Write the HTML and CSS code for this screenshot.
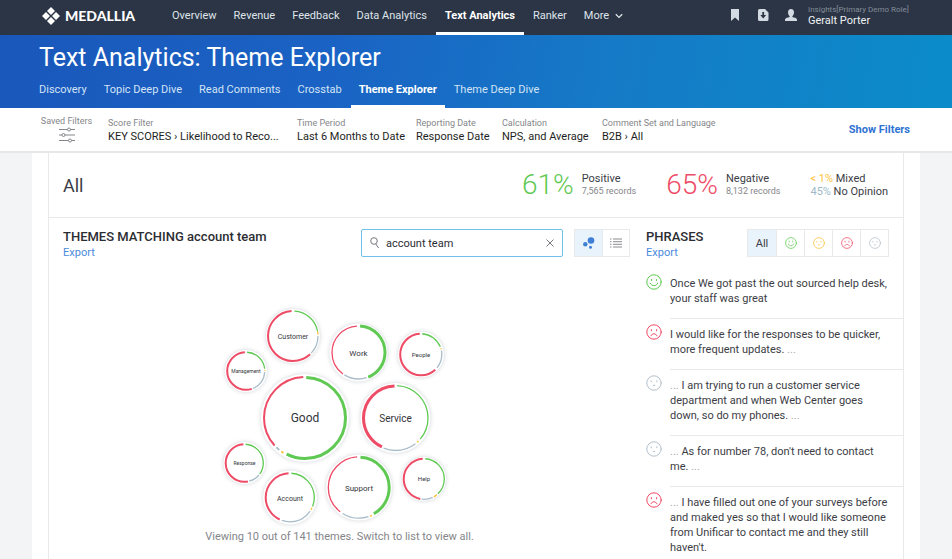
FILE: index.html
```html
<!DOCTYPE html>
<html lang="en">
<head>
  <meta charset="UTF-8"/>
  <meta name="viewport" content="width=device-width,initial-scale=1"/>
  <title>Text Analytics: Theme Explorer</title>
  <link rel="stylesheet" href="styles.css">
</head>
<body>
  <!-- shared face icons -->
  <svg class="sprite" aria-hidden="true">
    <symbol id="face-happy" viewBox="0 0 16 16">
      <circle cx="8" cy="8" r="7.2"/>
      <path d="M5.6 5.4v1.2M10.4 5.4v1.2M4.3 9.2c1.2 3.4 6.2 3.4 7.4 0"/>
    </symbol>
    <symbol id="face-mixed" viewBox="0 0 16 16">
      <circle cx="8" cy="8" r="7.2"/>
      <path d="M5.2 5.8v1M10.8 5.8v1M7.2 10.4h1.6"/>
    </symbol>
    <symbol id="face-sad" viewBox="0 0 16 16">
      <circle cx="8" cy="8" r="7.2"/>
      <path d="M5.4 5.6v1.2M10.6 5.6v1.2M5 11.8c1-2.800 5-2.800 6 0"/>
    </symbol>
  </svg>

  <nav class="topbar">
    <a class="logo" href="#">
      <svg viewBox="0 0 18 18" width="18" height="18" aria-hidden="true">
        <path d="M9 0l4 4-4 4-4-4zM9 10l4 4-4 4-4-4zM4 5l4 4-4 4-4-4zM14 5l4 4-4 4-4-4z"/>
      </svg>
      MEDALLIA
    </a>
    <div class="nav-links">
      <a href="#">Overview</a>
      <a href="#">Revenue</a>
      <a href="#">Feedback</a>
      <a href="#">Data Analytics</a>
      <a href="#" class="active">Text Analytics</a>
      <a href="#">Ranker</a>
      <a href="#">More
        <svg viewBox="0 0 8 6" width="8" height="6" aria-hidden="true"><path d="M.8 1.2L4 4.4l3.2-3.2"/></svg>
      </a>
    </div>
    <div class="tools">
      <button aria-label="Bookmarks">
        <svg viewBox="0 0 12 12" width="12" height="12"><path d="M2 0h8v12L6 8.6 2 12z"/></svg>
      </button>
      <button aria-label="Downloads">
        <svg viewBox="0 0 12 12" width="12" height="12"><path fill-rule="evenodd" d="M2.5 0H8l3.5 3.5v7A1.5 1.5 0 0 1 10 12H2.500A1.500 1.500 0 0 1 1 10.500v-9A1.500 1.500 0 0 1 2.500 0zM5.300 3v3H3.300L6.200 9.500 9.200 6H7.100V3z"/></svg>
      </button>
      <button aria-label="Account">
        <svg viewBox="0 0 12 12" width="12" height="12"><path d="M6 0c2 0 3 1.300 3 3.200C9 5 8.300 6.300 7.400 7v1c1.800.6 4.100.9 4.600 2.400V12H0v-1.600C.5 8.900 2.800 8.600 4.600 8V7C3.700 6.300 3 5 3 3.200 3 1.300 4 0 6 0z"/></svg>
      </button>
      <div class="user">
        <span class="role">Insights[Primary Demo Role]</span>
        <span class="name">Geralt Porter</span>
      </div>
    </div>
  </nav>

  <header class="page-head">
    <h1>Text Analytics: Theme Explorer</h1>
    <div class="tabs">
      <a href="#">Discovery</a>
      <a href="#">Topic Deep Dive</a>
      <a href="#">Read Comments</a>
      <a href="#">Crosstab</a>
      <a href="#" class="active">Theme Explorer</a>
      <a href="#">Theme Deep Dive</a>
    </div>
  </header>

  <section class="filters">
    <button class="saved">
      Saved Filters
      <svg viewBox="0 0 16 16" width="16" height="16" aria-hidden="true">
        <path d="M0 2.500h8.500M11.500 2.500H16M0 8h3M6 8h10M0 13.500h9.500M12.500 13.500H16"/>
        <circle cx="10" cy="2.500" r="1.500"/><circle cx="4.500" cy="8" r="1.500"/><circle cx="11" cy="13.500" r="1.500"/>
      </svg>
    </button>
    <div class="filter score"><span>Score Filter</span><b>KEY SCORES › Likelihood to Reco...</b></div>
    <div class="filter period"><span>Time Period</span><b>Last 6 Months to Date</b></div>
    <div class="filter date"><span>Reporting Date</span><b>Response Date</b></div>
    <div class="filter calc"><span>Calculation</span><b>NPS, and Average</b></div>
    <div class="filter"><span>Comment Set and Language</span><b>B2B › All</b></div>
    <a class="show-filters" href="#">Show Filters</a>
  </section>

  <main class="shell">
    <div class="card">
      <div class="summary">
        <h2>All</h2>
        <div class="stat positive">
          <strong>61%</strong>
          <p>Positive<small>7,565 records</small></p>
        </div>
        <div class="stat negative">
          <strong>65%</strong>
          <p>Negative<small>8,132 records</small></p>
        </div>
        <div class="others">
          <p><span class="few">&lt; 1%</span> Mixed</p>
          <p><span class="none">45%</span> No Opinion</p>
        </div>
      </div>

      <div class="columns">
        <section class="themes">
          <div class="section-head">
            <div class="heading">
              <h3>THEMES MATCHING account team</h3>
              <a href="#">Export</a>
            </div>
            <label class="search">
              <svg viewBox="0 0 10 12" width="10" height="12" aria-hidden="true"><circle cx="4" cy="4" r="3.300"/><path d="M5.800 7l2.800 4"/></svg>
              <input type="text" value="account team" aria-label="Search themes"/>
              <button aria-label="Clear search"><svg viewBox="0 0 8 8" width="8" height="8"><path d="M.5.500l7 7M7.500.500l-7 7"/></svg></button>
            </label>
            <div class="toggle view">
              <button class="on" aria-label="Bubble view">
                <svg viewBox="0 0 12 12" width="12" height="12"><circle cx="8" cy="3.500" r="3.300"/><circle cx="2.300" cy="7.300" r="2.200"/><circle cx="7.500" cy="10.300" r="1.500"/></svg>
              </button>
              <button aria-label="List view">
                <svg viewBox="0 0 12 10" width="12" height="10"><path d="M0 1h1.500M3 1h9M0 3.700h1.500M3 3.700h9M0 6.300h1.500M3 6.300h9M0 9h1.500M3 9h9"/></svg>
              </button>
            </div>
          </div>

          <!-- each ring runs clockwise from the top: positive, mixed, no opinion, negative -->
          <svg class="bubbles" viewBox="0 0 240 229" width="240" height="229">
            <g transform="translate(73 36)">
              <circle class="disc" r="27"/>
              <circle class="arc pos" r="25" pathLength="100" stroke-dasharray="21 100" stroke-dashoffset="-1"/>
              <circle class="arc mix" r="25" pathLength="100" stroke-dasharray="2 100" stroke-dashoffset="-22"/>
              <circle class="arc non" r="25" pathLength="100" stroke-dasharray="12 100" stroke-dashoffset="-25"/>
              <circle class="arc neg mid" r="25" pathLength="100" stroke-dasharray="61 100" stroke-dashoffset="-38"/>
              <text class="t7" y="3">Customer</text>
            </g>
            <g transform="translate(138.500 52.500)">
              <circle class="disc" r="29"/>
              <circle class="arc pos thick" r="26.500" pathLength="100" stroke-dasharray="43 100" stroke-dashoffset="-1"/>
              <circle class="arc non" r="26.500" pathLength="100" stroke-dasharray="14 100" stroke-dashoffset="-45"/>
              <circle class="arc neg" r="26.500" pathLength="100" stroke-dasharray="39 100" stroke-dashoffset="-60"/>
              <text class="t8" y="3">Work</text>
            </g>
            <g transform="translate(201 54.500)">
              <circle class="disc" r="23"/>
              <circle class="arc pos" r="20.800" pathLength="100" stroke-dasharray="18 100" stroke-dashoffset="-1"/>
              <circle class="arc mix" r="20.800" pathLength="100" stroke-dasharray="1 100" stroke-dashoffset="-20"/>
              <circle class="arc non" r="20.800" pathLength="100" stroke-dasharray="14 100" stroke-dashoffset="-22"/>
              <circle class="arc neg mid" r="20.800" pathLength="100" stroke-dasharray="61 100" stroke-dashoffset="-38"/>
              <text class="t6" y="2">People</text>
            </g>
            <g transform="translate(26 71)">
              <circle class="disc" r="21"/>
              <circle class="arc pos" r="18.800" pathLength="100" stroke-dasharray="22 100" stroke-dashoffset="-1"/>
              <circle class="arc mix" r="18.800" pathLength="100" stroke-dasharray="1 100" stroke-dashoffset="-24"/>
              <circle class="arc non" r="18.800" pathLength="100" stroke-dasharray="18 100" stroke-dashoffset="-26"/>
              <circle class="arc neg mid" r="18.800" pathLength="100" stroke-dasharray="54 100" stroke-dashoffset="-45"/>
              <text class="t5" y="2">Management</text>
            </g>
            <g transform="translate(85 118)">
              <circle class="disc" r="44"/>
              <circle class="arc pos thick" r="40.500" pathLength="100" stroke-dasharray="57 100" stroke-dashoffset="-.5"/>
              <circle class="arc mix mid" r="41" pathLength="100" stroke-dasharray="1 100" stroke-dashoffset="-58.800"/>
              <circle class="arc non mid" r="41" pathLength="100" stroke-dasharray="1.500 100" stroke-dashoffset="-60.800"/>
              <circle class="arc neg mid" r="41" pathLength="100" stroke-dasharray="36 100" stroke-dashoffset="-63.300"/>
              <text class="t12" y="4">Good</text>
            </g>
            <g transform="translate(175.500 118)">
              <circle class="disc" r="35"/>
              <circle class="arc pos" r="32.500" pathLength="100" stroke-dasharray="35.500 100" stroke-dashoffset="-.8"/>
              <circle class="arc mix" r="32.500" pathLength="100" stroke-dasharray="1 100" stroke-dashoffset="-37.500"/>
              <circle class="arc non" r="32.500" pathLength="100" stroke-dasharray="16.500 100" stroke-dashoffset="-39.500"/>
              <circle class="arc neg thick" r="32" pathLength="100" stroke-dasharray="42.500 100" stroke-dashoffset="-57"/>
              <text class="t10" y="4">Service</text>
            </g>
            <g transform="translate(24.500 163)">
              <circle class="disc" r="21"/>
              <circle class="arc pos" r="18.800" pathLength="100" stroke-dasharray="34 100" stroke-dashoffset="-1"/>
              <circle class="arc non" r="18.800" pathLength="100" stroke-dasharray="10 100" stroke-dashoffset="-36"/>
              <circle class="arc neg mid" r="18.800" pathLength="100" stroke-dasharray="52 100" stroke-dashoffset="-47"/>
              <text class="t5" y="2">Response</text>
            </g>
            <g transform="translate(70 197.500)">
              <circle class="disc" r="27"/>
              <circle class="arc pos" r="24.300" pathLength="100" stroke-dasharray="30 100" stroke-dashoffset="-1"/>
              <circle class="arc mix" r="24.300" pathLength="100" stroke-dasharray="1.500 100" stroke-dashoffset="-32"/>
              <circle class="arc non" r="24.300" pathLength="100" stroke-dasharray="21 100" stroke-dashoffset="-34.500"/>
              <circle class="arc neg mid" r="24.300" pathLength="100" stroke-dasharray="42 100" stroke-dashoffset="-57"/>
              <text class="t7" y="3">Account</text>
            </g>
            <g transform="translate(139 187.500)">
              <circle class="disc" r="33"/>
              <circle class="arc pos thick" r="30.200" pathLength="100" stroke-dasharray="41 100" stroke-dashoffset="-.8"/>
              <circle class="arc mix" r="30.700" pathLength="100" stroke-dasharray="1.200 100" stroke-dashoffset="-43"/>
              <circle class="arc non" r="30.700" pathLength="100" stroke-dasharray="14 100" stroke-dashoffset="-45"/>
              <circle class="arc neg" r="30.700" pathLength="100" stroke-dasharray="38.500 100" stroke-dashoffset="-60.500"/>
              <text class="t8" y="3">Support</text>
            </g>
            <g transform="translate(204 179)">
              <circle class="disc" r="22"/>
              <circle class="arc pos" r="20.300" pathLength="100" stroke-dasharray="37 100" stroke-dashoffset="-1"/>
              <circle class="arc mix" r="20.300" pathLength="100" stroke-dasharray="3 100" stroke-dashoffset="-39"/>
              <circle class="arc non" r="20.300" pathLength="100" stroke-dasharray="9 100" stroke-dashoffset="-43"/>
              <circle class="arc neg mid" r="20.300" pathLength="100" stroke-dasharray="46 100" stroke-dashoffset="-53"/>
              <text class="t6" y="2">Help</text>
            </g>
          </svg>
          <p class="caption">Viewing 10 out of 141 themes. Switch to list to view all.</p>
        </section>

        <section class="phrases">
          <div class="section-head">
            <div class="heading">
              <h3>PHRASES</h3>
              <a href="#">Export</a>
            </div>
            <div class="toggle mood">
              <button class="on">All</button>
              <button aria-label="Positive"><svg class="face happy"><use href="#face-happy"/></svg></button>
              <button aria-label="Mixed"><svg class="face mixed"><use href="#face-mixed"/></svg></button>
              <button aria-label="Negative"><svg class="face sad"><use href="#face-sad"/></svg></button>
              <button aria-label="No opinion"><svg class="face neutral"><use href="#face-mixed"/></svg></button>
            </div>
          </div>
          <ul>
            <li><svg class="face happy"><use href="#face-happy"/></svg><p>Once We got past the out sourced help desk, your staff was great</p></li>
            <li><svg class="face sad"><use href="#face-sad"/></svg><p>I would like for the responses to be quicker, more frequent updates. <i>...</i></p></li>
            <li><svg class="face neutral"><use href="#face-mixed"/></svg><p><i>...</i> I am trying to run a customer service department and when Web Center goes down, so do my phones. <i>...</i></p></li>
            <li><svg class="face neutral"><use href="#face-mixed"/></svg><p><i>...</i> As for number 78, don't need to contact me. <i>...</i></p></li>
            <li><svg class="face sad"><use href="#face-sad"/></svg><p><i>...</i> I have filled out one of your surveys before and maked yes so that I would like someone from Unificar to contact me and they still haven't.</p></li>
          </ul>
        </section>
      </div>
    </div>
  </main>
</body>
</html>
```

FILE: styles.css
```css
:root {
  --navy: #2b3545;
  --text: #3c3d45;
  --muted: #85868a;
  --link: #4a8bdc;
  --green: #5fc953;
  --red: #ee4b66;
  --yellow: #fbc23c;
  --gray: #a9bdc9;
  --border: #e8e9eb;
}
*, *::before, *::after { margin: 0; padding: 0; box-sizing: border-box; }
body {
  font-family: Roboto, "Liberation Sans", sans-serif;
  font-size: 11px;
  line-height: 15px;
  color: var(--text);
  background: #f3f4f6;
}
a { text-decoration: none; color: inherit; }
button { font: inherit; color: inherit; background: none; border: none; cursor: pointer; }
svg { display: block; flex: none; }
.sprite { position: absolute; width: 0; height: 0; }

/* Top navigation */
.topbar { display: flex; height: 35px; padding: 0 40px 0 42px; background: var(--navy); color: #dfe4ea; }
.logo {
  display: flex; align-items: center; gap: 5px;
  width: 122px; padding-bottom: 4px;
  font-family: Lato, sans-serif; font-size: 14px; font-weight: 900; color: #fff;
}
.logo svg { fill: #fff; }
.nav-links { display: flex; gap: 1px; }
.nav-links a {
  display: flex; align-items: center; gap: 6px;
  padding: 0 8px 1px; border-bottom: 3px solid transparent;
}
.nav-links a.active { padding: 0 9px 1px; font-weight: 700; color: #fff; border-color: #fff; }
.nav-links svg { fill: none; stroke: #dfe4ea; stroke-width: 1.3; }
.tools { display: flex; align-items: center; margin-left: auto; padding-bottom: 5px; }
.tools button { display: flex; justify-content: center; width: 28px; }
.tools svg { fill: #d3dae2; }
.user { display: flex; flex-direction: column; width: 107px; padding-left: 3px; line-height: 11px; }
.user .role { font-size: 8px; color: #848c98; white-space: nowrap; }
.user .name { color: #eef1f4; }

/* Page header */
.page-head {
  padding: 9px 39px 0;
  color: #fff;
  background: linear-gradient(100deg, #1a57bb 0%, #1a63c4 35%, #157bc7 65%, #0b8cc9 100%);
}
.page-head h1 { font-size: 25px; line-height: 27px; font-weight: 400; }
.tabs { display: flex; gap: 1px; margin: 8px -8px 0; }
.tabs a { padding: 3px 8px 8px; border-bottom: 3px solid transparent; color: #d3e4f6; }
.tabs a.active { font-weight: 700; color: #fff; border-color: #fff; }

/* Filter bar */
.filters {
  display: flex; align-items: center;
  height: 45px; padding: 0 42px 0 39px;
  background: #fff; border-bottom: 2px solid #e6e7e9;
}
.saved {
  display: flex; flex-direction: column; align-items: center;
  width: 55px; margin-right: 14px; padding-bottom: 2px;
  font-size: 9px; line-height: 12px; color: var(--muted); white-space: nowrap;
}
.saved svg { fill: none; stroke: #85868a; stroke-width: 1; }
.filter { display: flex; flex-direction: column; line-height: 14px; white-space: nowrap; }
.filter span { font-size: 9px; color: var(--muted); }
.filter b { font-weight: 400; color: #1e1f24; }
.score { width: 189px; }
.period { width: 119px; }
.date { width: 86px; }
.calc { width: 100px; }
.show-filters { margin-left: auto; font-weight: 700; color: #2f72d4; }

/* Content card */
.shell { margin: 0 32px; padding: 0 16px; background: #fff; }
.card { border: 1px solid var(--border); border-top: none; }
.summary {
  display: flex; align-items: center;
  height: 65px; padding: 0 15px 0 14px;
  border-bottom: 1px solid var(--border);
}
.summary h2 { margin-right: auto; font-size: 18px; font-weight: 400; }
.stat { display: flex; align-items: center; gap: 8px; }
.stat strong { font-size: 28px; line-height: 32px; font-weight: 300; }
.stat p { line-height: 12px; }
.stat small { display: block; font-size: 9px; color: var(--muted); }
.positive, .negative { margin-right: 30px; }
.positive strong { color: var(--green); }
.negative strong { color: var(--red); }
.others p { line-height: 13px; }
.others .few { color: var(--yellow); }
.others .none { color: #9dbac6; }

.columns { display: flex; }
.themes { flex: 1; padding-top: 11px; }
.phrases { width: 273px; padding: 11px 0 0 16px; }
.section-head { display: flex; align-items: flex-start; }
.themes .section-head { padding-left: 14px; }
.heading { margin-right: auto; }
.heading h3 { font-size: 13px; line-height: 16px; font-weight: 500; color: #2c2d33; }
.heading a { display: block; color: var(--link); line-height: 16px; }

.search {
  display: flex; align-items: center; gap: 6px;
  width: 202px; height: 28px; padding: 0 6px 0 8px;
  border: 1px solid #6fc0ea; border-radius: 2px;
}
.search input { flex: 1; min-width: 0; border: none; outline: none; font: inherit; color: #2c2d33; }
.search button { padding: 2px; }
.search svg { fill: none; stroke: #77787d; }

.toggle { display: flex; height: 28px; border: 1px solid var(--border); }
.toggle button { display: flex; align-items: center; justify-content: center; width: 27px; }
.toggle button + button { border-left: 1px solid var(--border); }
.toggle .on { background: #e9f3fc; }
.view { margin-left: 11px; }
.view svg { fill: #3f7fd6; }
.view button + button svg { stroke: #8b8c92; }
.mood { margin-right: 14px; }
.mood button { width: 28px; }
.mood .face { width: 12px; height: 12px; }

/* Bubble chart */
.bubbles { margin: 39px auto 0; }
.disc { fill: #fff; filter: drop-shadow(0 0 2px #cfd2d8); }
.arc { fill: none; stroke-width: 1.3; transform: rotate(-90deg); }
.mid { stroke-width: 2; }
.thick { stroke-width: 3; }
.pos { stroke: var(--green); }
.mix { stroke: var(--yellow); }
.non { stroke: var(--gray); }
.neg { stroke: var(--red); }
.bubbles text { text-anchor: middle; fill: #34353b; }
.t5 { font-size: 5px; }
.t6 { font-size: 6px; }
.t7 { font-size: 7px; }
.t8 { font-size: 8px; }
.t10 { font-size: 10px; }
.t12 { font-size: 12px; }
.caption { text-align: center; color: var(--muted); }

/* Phrase list */
.phrases ul { list-style: none; margin-top: 7px; }
.phrases li { display: flex; gap: 8px; }
.phrases li p { flex: 1; padding: 8px 12px 12px 0; }
.phrases li + li p { border-top: 1px solid var(--border); }
.phrases li .face { margin-top: 6px; }
.phrases i { font-style: normal; color: #a9aaae; }
.face { width: 16px; height: 16px; fill: none; stroke: currentColor; stroke-width: 1; stroke-linecap: round; }
.happy { color: var(--green); }
.mixed { color: var(--yellow); }
.sad { color: var(--red); }
.neutral { color: #b3bfca; }
```
